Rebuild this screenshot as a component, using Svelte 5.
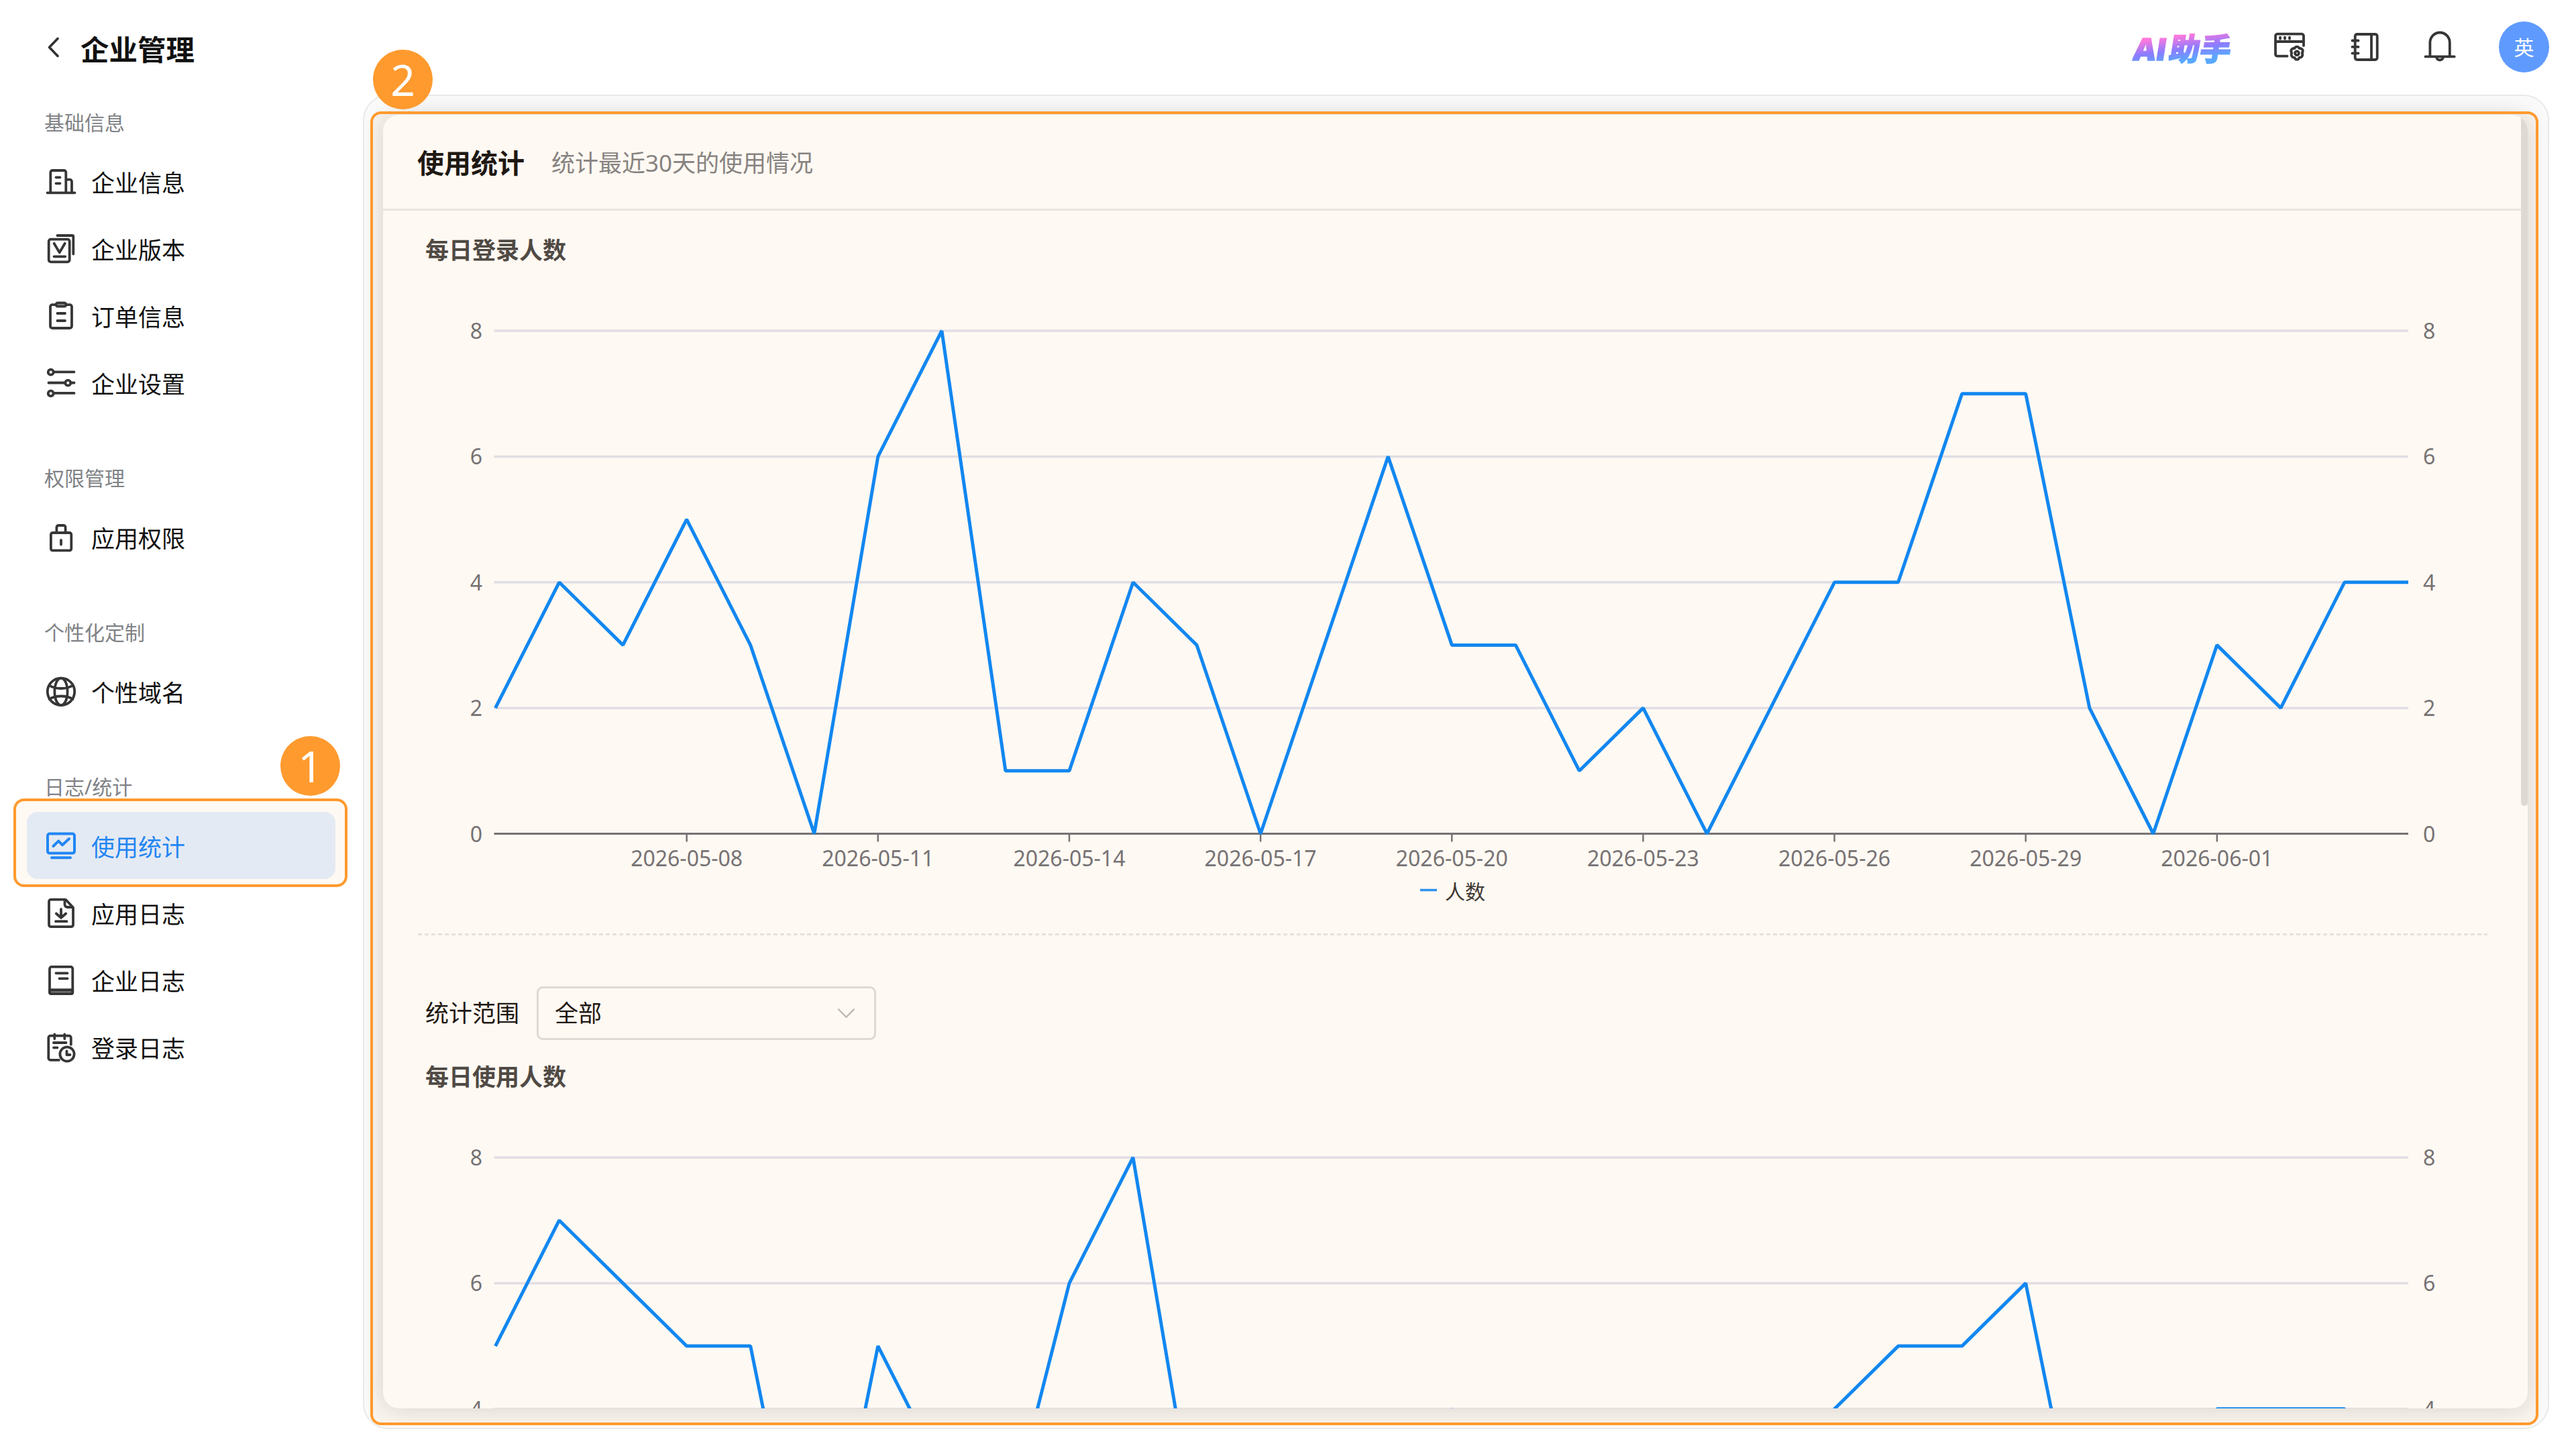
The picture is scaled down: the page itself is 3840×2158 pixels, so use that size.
<script>
  const groups = [
    { label: '基础信息', items: [['企业信息', 'building'], ['企业版本', 'version'], ['订单信息', 'order'], ['企业设置', 'sliders']] },
    { label: '权限管理', items: [['应用权限', 'lock']] },
    { label: '个性化定制', items: [['个性域名', 'globe']] },
    { label: '日志/统计', items: [['使用统计', 'stats'], ['应用日志', 'appLog'], ['企业日志', 'book'], ['登录日志', 'loginLog']] }
  ];
  const active = '使用统计';

  const logins = [2, 4, 3, 5, 3, 0, 6, 8, 1, 1, 4, 3, 0, 3, 6, 3, 3, 1, 2, 0, 2, 4, 4, 7, 7, 2, 0, 3, 2, 4, 4];
  const usage = [5, 7, 6, 5, 5, 0, 5, 3, 2, 6, 8, 2, 1, 0, 2, 4, 2, 1, 0, 1, 2, 4, 5, 5, 6, 1, 0, 4, 4, 4, 1];
  const dates = ['2026-05-08', '2026-05-11', '2026-05-14', '2026-05-17', '2026-05-20', '2026-05-23', '2026-05-26', '2026-05-29', '2026-06-01'];

  const left = 167.5;
  const right = 3019;
  const top = 90;
  const bottom = 839.5;
  const px = (i) => left + (i * (right - left)) / 30;
  const py = (v) => bottom - (v * (bottom - top)) / 8;
  const points = (data) => data.map((v, i) => `${px(i).toFixed(1)},${py(v).toFixed(1)}`).join(' ');
</script>

{#snippet icon(name)}
  <svg class="icon" viewBox="0 0 50 50">
    {#if name === 'building'}
      <path d="M9.3 42V12a3 3 0 0 1 3-3h17a3 3 0 0 1 3 3v30M32.3 22.7H38a3 3 0 0 1 3 3V42M4.5 42.3h41M17.5 19.3h6M17.5 28.3h6" />
    {:else if name === 'version'}
      <rect x="6.7" y="11.7" width="31" height="33.6" rx="3" />
      <path d="M19.5 6h22.3a1.5 1.5 0 0 1 1.5 1.5v26M14.6 17.8l8.1 13.6 8-13.6M14.5 37.3h16.7" />
    {:else if name === 'order'}
      <path d="M17 9.2h-5a3 3 0 0 0-3 3V41a3 3 0 0 0 3 3h26a3 3 0 0 0 3-3V12.2a3 3 0 0 0-3-3h-5M19.5 22h11.5M19.5 33h11.5" />
      <rect class="soft" x="17.5" y="6.3" width="15" height="5.4" rx="2.7" />
    {:else if name === 'sliders'}
      <circle cx="9.7" cy="9.7" r="4" /><circle cx="35.3" cy="25.7" r="4" /><circle cx="9.7" cy="41.3" r="4" />
      <path d="M14.5 9.3h30M6.5 25.5h24M40 25.5h4.5M14.5 40.9h30" />
    {:else if name === 'lock'}
      <rect x="9.9" y="19" width="30.4" height="26.3" rx="2.5" />
      <path d="M18.4 19v-8a3 3 0 0 1 3-3h7.2a3 3 0 0 1 3 3v8M25 30v6.5" />
    {:else if name === 'globe'}
      <circle cx="25" cy="25.8" r="20.2" />
      <ellipse cx="25" cy="25.8" rx="9.6" ry="20.2" />
      <path d="M7.5 16.5c9 6 26 6 35 0M7.5 37c9-6 26-6 35 0" />
    {:else if name === 'stats'}
      <rect x="5" y="7.6" width="40" height="29" rx="3" />
      <path d="M11 43.3h28M13.5 26l7.7-7.6 5.8 5.9 10-9.3" />
    {:else if name === 'appLog'}
      <path d="M31 5.6H10a3 3 0 0 0-3 3v34.6a3 3 0 0 0 3 3h30a3 3 0 0 0 3-3V17.5L32.5 6.3M30.5 6v7a4 4 0 0 0 4 4h8M25 20v12M17.8 26.5l7.2 6.3 7.2-6.3M17 38.2h16.5" />
    {:else if name === 'book'}
      <rect class="soft" x="8" y="40.5" width="34.3" height="5.5" rx="2" />
      <rect x="8" y="5.9" width="34.3" height="40" rx="3" />
      <path d="M8 40.5h34M17.5 15.3h17M22.5 23.3h12" />
    {:else if name === 'loginLog'}
      <path d="M22 44.8H9.3a3 3 0 0 1-3-3V11.7a3 3 0 0 1 3-3h27.5a3 3 0 0 1 3 3v10M15.3 6.5v6.5M30.3 6.5v6.5M14 19h18.5M14 26.3h5.5" />
      <circle cx="34" cy="36" r="10.6" />
      <path d="M33.5 31.5v5.500h5" />
    {:else if name === 'window'}
      <path d="M21.5 38.7H7a3 3 0 0 1-3-3V8.7a3 3 0 0 1 3-3h36a3 3 0 0 1 3 3V23M4 17h42" />
      <path d="M11 10.6v2.2M18 10.6v2.2M25 10.6v2.2" />
      <path d="M36 24.6c2.1 0 3 1 3.6 2.5 1.8-.3 3.3.1 4.5 1.7 1.1 1.9.9 3.4-.4 5 .8 1.7 1 3.4-.1 5.1-1 1.6-2.4 2.1-4.1 1.9-.6 1.8-1.6 2.9-3.5 2.9s-2.9-1.1-3.5-2.9c-1.700.2-3.100-.3-4.100-1.900-1.100-1.700-.9-3.400-.1-5.100-1.300-1.600-1.500-3.100-.4-5 1.200-1.600 2.700-2 4.500-1.700.6-1.500 1.500-2.500 3.600-2.500z" />
      <circle cx="36" cy="34.3" r="2.9" />
    {:else if name === 'notebook'}
      <rect x="10.7" y="6" width="33" height="38" rx="3" />
      <path d="M35 6v38M6.5 15.5h9M6.5 24.9h9M6.5 34.4h9" />
    {:else if name === 'bell'}
      <path d="M10.4 39V18.5a14.7 15 0 0 1 29.4 0V39M3.5 39.3h43.2M20 40.5a5.2 5.5 0 0 0 10 0" />
    {/if}
  </svg>
{/snippet}

{#snippet chart(data, floor)}
  <svg class="chart" class:partial={floor > 0} viewBox={floor > 0 ? '0 0 3197 464' : '0 0 3197 987'}>
    {#each [0, 2, 4, 6, 8].filter((v) => v >= floor) as v}
      {#if v > 0}
        <line class="grid" x1={left - 2} x2={right} y1={py(v)} y2={py(v)} />
      {/if}
      <text class="tick" x="148" y={py(v) + 12} text-anchor="end">{v}</text>
      <text class="tick" x="3041" y={py(v) + 12}>{v}</text>
    {/each}
    {#if floor === 0}
      <line class="axis" x1={left - 2} x2={right} y1={bottom} y2={bottom} />
      {#each dates as d, i}
        <line class="mark" x1={px(3 + i * 3)} x2={px(3 + i * 3)} y1={bottom} y2={bottom + 12} />
        <text class="tick" x={px(3 + i * 3)} y="888" text-anchor="middle">{d}</text>
      {/each}
      <line class="key" x1="1546" x2="1571" y1="923.5" y2="923.5" />
      <text class="legend" x="1583" y="937">人数</text>
    {/if}
    <polyline class="series" points={points(data)} />
  </svg>
{/snippet}

<div class="page">
  <aside>
    <div class="title">
      <svg viewBox="0 0 20 32"><path d="M16 2.5L3.5 15.5L16 28.5" /></svg>
      <h1>企业管理</h1>
    </div>
    {#each groups as g}
      <nav>
        <h2>{g.label}</h2>
        {#each g.items as [text, ic]}
          <a class:active={text === active}>{@render icon(ic)}<span>{text}</span></a>
        {/each}
      </nav>
    {/each}
  </aside>

  <main>
    <header>
      <div class="ai"><b>AI</b>助手</div>
      <div class="tools">
        {@render icon('window')}
        {@render icon('notebook')}
        {@render icon('bell')}
      </div>
      <div class="avatar">英</div>
    </header>
    <div class="frame">
      <section class="card">
        <div class="head"><strong>使用统计</strong><span>统计最近30天的使用情况</span></div>
        <h3>每日登录人数</h3>
        {@render chart(logins, 0)}
        <div class="dash"></div>
        <div class="filter">
          <label for="scope">统计范围</label>
          <div class="select" id="scope">
            <span>全部</span>
            <svg viewBox="0 0 28 16"><path d="M1.5 1.5L14 14L26.5 1.5" /></svg>
          </div>
        </div>
        <h3>每日使用人数</h3>
        {@render chart(usage, 4)}
        <div class="thumb"></div>
      </section>
    </div>
  </main>

  <div class="mask nav-mask"></div>
  <div class="mask body-mask"></div>
  <div class="badge one">1</div>
  <div class="badge two">2</div>
</div>

<style>
  :global(body) { margin: 0; background: #fff; }
  .page {
    position: relative;
    display: flex;
    width: 3840px;
    height: 2158px;
    overflow: hidden;
    background: #fff;
    font-family: "Noto Sans", "Noto Sans CJK SC", sans-serif;
    color: #111;
  }
  h1, h2, h3 { margin: 0; }
  aside { width: 541px; flex: none; box-sizing: border-box; }
  .title { display: flex; align-items: center; height: 150px; padding-left: 70px; box-sizing: border-box; }
  .title svg { width: 20px; height: 32px; margin: -9px 30px 0 0; fill: none; stroke: #333; stroke-width: 3.6; stroke-linecap: round; stroke-linejoin: round; }
  h1 { font-size: 42.5px; line-height: 60px; padding-bottom: 3px; font-weight: 700; }
  nav { display: flex; flex-direction: column; margin-bottom: 60px; }
  h2 { height: 70px; padding: 0 0 4px 66px; box-sizing: border-box; font-size: 30px; line-height: 66px; font-weight: 400; color: #808286; }
  a { display: flex; align-items: center; gap: 20px; height: 100px; margin: 0 41px 0 40px; padding-left: 26px; box-sizing: border-box; border-radius: 16px; font-size: 35px; line-height: 50px; }
  a span { padding-top: 5px; }
  .active { background: #e3f0ff; color: #1485ff; }
  .icon { width: 50px; height: 50px; flex: none; fill: none; stroke: #363636; stroke-width: 3.8; stroke-linecap: round; stroke-linejoin: round; }
  .active .icon { stroke: #1485ff; stroke-width: 4; }
  .soft { fill: #999; }

  main { flex: 1; display: flex; flex-direction: column; padding-right: 40px; }
  header { display: flex; align-items: center; justify-content: flex-end; height: 141px; box-sizing: border-box; padding-bottom: 1px; }
  .ai {
    margin: 4px 62px 0 0;
    font-size: 46px;
    line-height: 48px;
    font-weight: 900;
    transform: skewX(-9deg);
    background: linear-gradient(172deg, #ff78dc 20%, #8b7cff 52%, #5aa8ff 78%);
    -webkit-background-clip: text;
    background-clip: text;
    color: transparent;
    -webkit-text-stroke: 1.5px transparent;
  }
  .ai b { font-family: "Open Sans", sans-serif; font-weight: 800; margin-right: 4px; }
  .tools { display: flex; gap: 62px; margin-right: 63px; }
  .avatar { width: 75px; height: 76px; border-radius: 50%; background: #5f9bff; color: #fff; font-size: 30px; line-height: 78px; text-align: center; }
  .frame { height: 1989px; box-sizing: border-box; border: 2px solid #e8e9e9; border-radius: 38px; background: #fafafa; padding: 28px 30px 29px 28px; overflow: hidden; }
  .card { position: relative; display: flex; flex-direction: column; height: 1928px; border-radius: 24px; background: #fff; overflow: hidden; box-shadow: 0 0 34px rgba(0, 0, 0, 0.15); }
  .head { flex: none; display: flex; align-items: center; gap: 40px; height: 143px; box-sizing: border-box; padding: 4px 0 0 51px; border-bottom: 3px solid #e9e9e9; }
  .head strong { font-size: 40px; line-height: 60px; font-weight: 700; }
  .head span { font-size: 35px; line-height: 60px; color: #808286; }
  h3 { flex: none; margin-left: 63px; font-size: 35px; line-height: 60px; font-weight: 700; color: #464646; }
  .head + h3 { margin-top: 29px; }
  .chart { display: block; width: 3197px; height: 987px; flex: none; }
  .partial { height: 464px; overflow: hidden; }
  .grid { stroke: #e0e3f0; stroke-width: 3.5; }
  .axis { stroke: #6e7079; stroke-width: 3; }
  .mark { stroke: #6e7079; stroke-width: 2.5; }
  .tick { font-size: 32px; fill: #6e7079; }
  .series { fill: none; stroke: #0486fc; stroke-width: 5; stroke-linejoin: bevel; }
  .key { stroke: #1d92fb; stroke-width: 3.5; }
  .legend { font-size: 30px; fill: #333; }
  .dash { flex: none; height: 3px; margin: 1px 60px 0 52px; background: repeating-linear-gradient(90deg, #e6e6e6 0 6px, transparent 6px 10px); }
  .filter { flex: none; display: flex; align-items: center; gap: 26px; margin: 76px 0 25px 63px; height: 80px; font-size: 35px; line-height: 50px; }
  .select { display: flex; align-items: center; justify-content: space-between; width: 506px; height: 80px; box-sizing: border-box; border: 3px solid #dcdde0; border-radius: 9px; padding: 0 28px 0 24px; }
  .select svg { width: 27px; height: 16px; fill: none; stroke: #bdbdbd; stroke-width: 2.6; }
  .thumb { position: absolute; right: 0; top: 0; width: 10px; height: 1030px; border-radius: 5px; background: #dedede; }

  .mask { position: absolute; box-sizing: border-box; border: 4px solid #ff9a2e; border-radius: 16px; background: rgba(255, 154, 46, 0.06); }
  .nav-mask { left: 20px; top: 1190px; width: 498px; height: 132px; }
  .body-mask { left: 552px; top: 166px; width: 3232px; height: 1958px; }
  .badge { position: absolute; width: 89px; height: 89px; border-radius: 50%; background: #ff9a2e; color: #fff; font-family: "Noto Sans", sans-serif; font-size: 64px; line-height: 90px; text-align: center; }
  .one { left: 418px; top: 1097px; }
  .two { left: 556px; top: 74px; }
</style>
